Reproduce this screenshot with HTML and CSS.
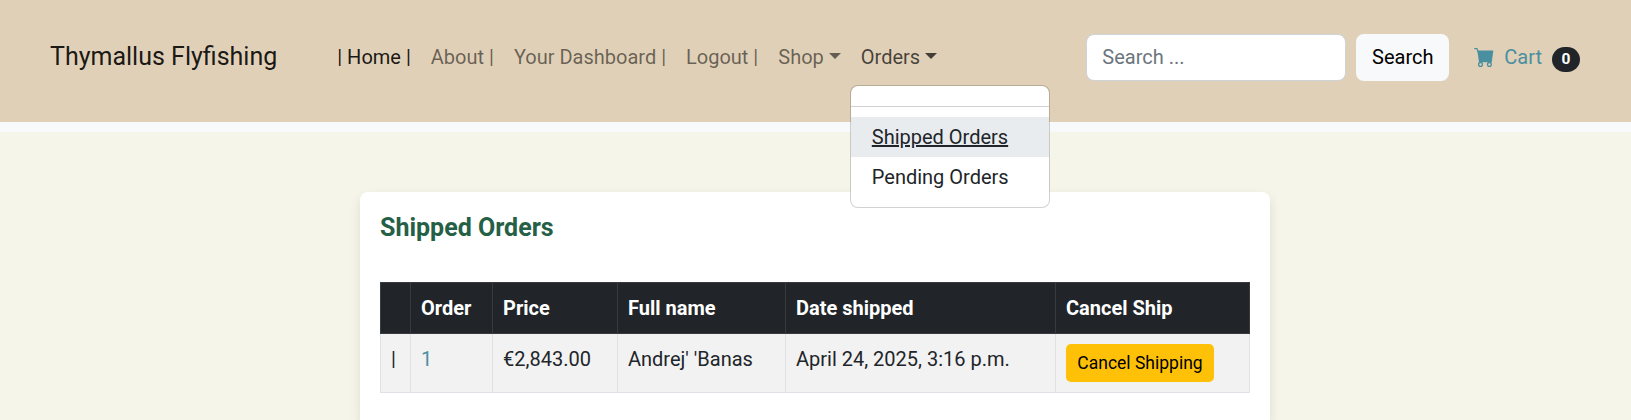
FILE: index.html
```html
<!DOCTYPE html>
<html lang="en">
<head>
<meta charset="utf-8">
<title>Shipped Orders</title>
<link rel="stylesheet" href="styles.css">
</head>
<body>
<nav class="navbar">
  <a class="brand" href="#">Thymallus Flyfishing</a>
  <ul class="nav">
    <li><a class="nav-link active" href="#">| Home |</a></li>
    <li><a class="nav-link" href="#">About |</a></li>
    <li><a class="nav-link" href="#">Your Dashboard |</a></li>
    <li><a class="nav-link" href="#">Logout |</a></li>
    <li><a class="nav-link toggle" href="#">Shop</a></li>
    <li class="dropdown">
      <a class="nav-link toggle open" href="#">Orders</a>
      <ul class="menu">
        <li class="divider"></li>
        <li><a class="item hovered" href="#">Shipped Orders</a></li>
        <li><a class="item" href="#">Pending Orders</a></li>
      </ul>
    </li>
  </ul>
  <form class="search">
    <input class="search-input" type="search" placeholder="Search ...">
    <button class="search-btn" type="button">Search</button>
  </form>
  <a class="cart" href="#">
    <svg class="cart-icon" viewBox="0 0 20 20" fill="none" stroke="currentColor"><path d="M.7 1.6H3l1 3" stroke-width="1.2" stroke-linecap="round"/><path d="M3.3 3.6h16l-1.5 11.6H5z" fill="currentColor" stroke="none"/><circle cx="6.5" cy="17.4" r="1.9" stroke-width="1.3"/><circle cx="15.4" cy="17.4" r="1.9" stroke-width="1.3"/></svg>
    <span class="cart-label">Cart</span>
    <span class="badge">0</span>
  </a>
</nav>
<main class="page">
  <section class="card">
    <h1 class="title">Shipped Orders</h1>
    <table class="orders">
      <colgroup><col class="c-mark"><col class="c-order"><col class="c-price"><col class="c-name"><col class="c-date"><col class="c-cancel"></colgroup>
      <thead>
        <tr><th></th><th>Order</th><th>Price</th><th>Full name</th><th>Date shipped</th><th>Cancel Ship</th></tr>
      </thead>
      <tbody>
        <tr><td>|</td><td><a class="order-link" href="#">1</a></td><td>€2,843.00</td><td>Andrej' 'Banas</td><td>April 24, 2025, 3:16 p.m.</td><td><button class="cancel" type="button">Cancel Shipping</button></td></tr>
      </tbody>
    </table>
  </section>
</main>
</body>
</html>
```
FILE: styles.css
```css
* { box-sizing: border-box; }
body {
  display: flex;
  flex-direction: column;
  margin: 0;
  height: 420px;
  overflow: hidden;
  background: #f5f5e9;
  color: #212529;
  font: 20px/30px Roboto, sans-serif;
}
a { color: inherit; text-decoration: none; }
ul { list-style: none; margin: 0; padding: 0; }

.navbar {
  display: flex;
  flex: none;
  align-items: center;
  height: 132px;
  padding: 0 51px 8px 50px;
  background: #e0d0b7;
  border-bottom: 10px solid #f8f9fa;
}
.brand { font-size: 25px; color: rgba(0, 0, 0, .9); margin-right: 50px; }
.nav { display: flex; white-space: nowrap; }
.nav-link { display: block; padding: 10px; color: rgba(0, 0, 0, .55); }
.nav-link.active { color: rgba(0, 0, 0, .9); }
.nav-link.open { color: rgba(0, 0, 0, .7); }
.toggle::after {
  content: "";
  display: inline-block;
  margin-left: 5px;
  vertical-align: 5px;
  border: 6px solid transparent;
  border-top-color: currentColor;
  border-bottom: 0;
}
.dropdown { position: relative; }
.menu {
  position: absolute;
  z-index: 10;
  top: 53px;
  left: -1px;
  width: 200px;
  height: 123px;
  padding: 10px 0;
  background: #fff;
  background-clip: padding-box;
  border: 1px solid rgba(0, 0, 0, .175);
  border-radius: 8px;
}
.divider { height: 1px; margin: 10px 0; background: rgba(0, 0, 0, .175); }
.item { display: block; padding: 5px 20px 5px 21px; }
.item.hovered { background: #e9ecef; text-decoration: underline; text-decoration-thickness: 2px; }

.search { display: flex; align-items: center; gap: 10px; margin-left: auto; }
.search-input {
  width: 260px;
  height: 47px;
  padding: 0 15px;
  font: inherit;
  background: #fff;
  border: 1px solid #ced4da;
  border-radius: 8px;
}
.search-input::placeholder { color: #6c757d; opacity: 1; }
.search-btn {
  width: 93px;
  height: 47px;
  padding: 0;
  font: inherit;
  color: #000;
  background: #f8f9fa;
  border: 0;
  border-radius: 8px;
}
.cart { display: flex; align-items: center; margin-left: 25px; color: #4a8fa0; }
.cart-icon { width: 20px; height: 20px; margin-top: -1px; }
.cart-label { margin-left: 10px; }
.badge {
  width: 28px;
  height: 25px;
  margin: 4px 0 0 10px;
  border-radius: 13px;
  background: #212529;
  color: #fff;
  font-size: 15.5px;
  font-weight: 700;
  line-height: 25px;
  text-align: center;
}

.page {
  flex: 1;
  min-height: 0;
  padding: 60px 361px 0 360px;
}
.card {
  height: 100%;
  padding: 21px 20px 0;
  background: #fff;
  border-radius: 8px 8px 0 0;
  box-shadow: 0 5px 12px rgba(0, 0, 0, .1);
}
.title { margin: 0 0 39px; font-size: 25px; line-height: 30px; font-weight: 700; color: #256046; }
.orders { width: 870px; table-layout: fixed; border-collapse: collapse; }
.c-mark { width: 30px; }
.c-order { width: 82px; }
.c-price { width: 125px; }
.c-name { width: 168px; }
.c-date { width: 270px; }
.orders th, .orders td { padding: 10px; text-align: left; vertical-align: top; border: 1px solid #dee2e6; }
.orders th { height: 51px; font-weight: 700; color: #fff; background: #212529; border-color: #373b3e; }
.orders td { background: #f2f2f2; }
.order-link { color: #4a8fa0; }
.cancel {
  display: block;
  width: 148px;
  height: 38px;
  padding: 0;
  font: 17.5px/26px Roboto, sans-serif;
  color: #000;
  background: #ffc107;
  border: 0;
  border-radius: 5px;
}
```
